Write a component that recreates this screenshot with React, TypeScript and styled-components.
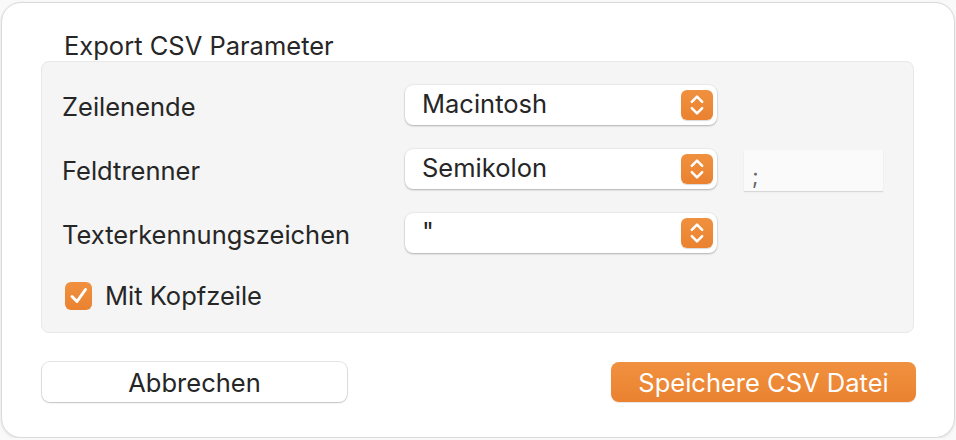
import * as React from "react";
import styled, { createGlobalStyle } from "styled-components";

const GlobalStyle = createGlobalStyle`
  html, body {
    margin: 0;
    padding: 0;
    background: #f9f9f9;
  }
  body {
    font-family: Inter, "Liberation Sans", sans-serif;
  }
`;

const rows = [
  { label: "Zeilenende", value: "Macintosh", field: null as string | null },
  { label: "Feldtrenner", value: "Semikolon", field: ";" },
  { label: "Texterkennungszeichen", value: '"', field: null },
];

const Stepper = () => (
  <StepperBox>
    <svg width="16" height="24" viewBox="0 0 16 24" fill="none">
      <path
        d="M2.8 8.8 L8 3.6 L13.2 8.8"
        stroke="#fff"
        strokeWidth="2.5"
        strokeLinecap="round"
        strokeLinejoin="round"
      />
      <path
        d="M2.8 15.2 L8 20.4 L13.2 15.2"
        stroke="#fff"
        strokeWidth="2.5"
        strokeLinecap="round"
        strokeLinejoin="round"
      />
    </svg>
  </StepperBox>
);

class App extends React.Component {
  public render() {
    return (
      <>
        <GlobalStyle />
        <Window>
          <Title>Export CSV Parameter</Title>
          <Group>
            {rows.map((r) => (
              <Row key={r.label}>
                <Label>{r.label}</Label>
                <Popup>
                  <PopupText>{r.value}</PopupText>
                  <Stepper />
                </Popup>
                {r.field !== null && <TextField>{r.field}</TextField>}
              </Row>
            ))}
            <CheckRow>
              <CheckBox>
                <svg width="20" height="18" viewBox="0 0 20 18" fill="none">
                  <path
                    d="M3 9.5 L8 14.5 L16.5 2.5"
                    stroke="#fff"
                    strokeWidth="3"
                    strokeLinecap="round"
                    strokeLinejoin="round"
                  />
                </svg>
              </CheckBox>
              <CheckLabel>Mit Kopfzeile</CheckLabel>
            </CheckRow>
          </Group>
          <Buttons>
            <Button>Abbrechen</Button>
            <Button $primary>Speichere CSV Datei</Button>
          </Buttons>
        </Window>
      </>
    );
  }
}

const Window = styled.div`
  box-sizing: border-box;
  margin: 2px 1px 0 1px;
  height: 436px;
  background: #ffffff;
  border: 1px solid #dadada;
  border-radius: 20px;
  box-shadow: 0 1px 3px rgba(0, 0, 0, 0.1);
  padding: 30px 40px 0 39px;
  color: #262626;
`;

const Title = styled.div`
  font-size: 25.5px;
  line-height: 28px;
  margin-left: 23px;
  margin-top: -1px;
  color: #262626;
`;

const Group = styled.div`
  box-sizing: border-box;
  height: 272px;
  margin-top: 1px;
  background: #f5f5f5;
  border: 1px solid #e8e8e8;
  border-radius: 8px;
  padding: 23px 20px 0 20px;
  display: flex;
  flex-direction: column;
  gap: 24px;
`;

const Row = styled.div`
  display: flex;
  align-items: center;
  height: 40px;
`;

const Label = styled.div`
  width: 343px;
  font-size: 25.5px;
  line-height: 28px;
  padding-top: 4px;
`;

const Popup = styled.div`
  box-sizing: border-box;
  width: 312px;
  height: 40px;
  background: #ffffff;
  border-radius: 8px;
  box-shadow: 0 0 0 0.5px rgba(0, 0, 0, 0.08), 0 1px 2px rgba(0, 0, 0, 0.25);
  display: flex;
  align-items: center;
  padding: 0 4px 0 17px;
`;

const PopupText = styled.div`
  flex: 1;
  font-size: 25.5px;
  line-height: 28px;
  margin-top: -2px;
`;

const StepperBox = styled.div`
  width: 32px;
  height: 30px;
  border-radius: 6px;
  background: linear-gradient(#f0913f, #ea8230);
  display: flex;
  align-items: center;
  justify-content: center;
  box-shadow: 0 1px 1px rgba(0, 0, 0, 0.15);
`;

const TextField = styled.div`
  box-sizing: border-box;
  margin-left: 27px;
  margin-top: 2px;
  width: 139px;
  height: 41px;
  background: #fafafa;
  box-shadow: 0 1px 1px rgba(0, 0, 0, 0.12);
  font-size: 22px;
  color: #666666;
  padding: 13px 0 0 8px;
`;

const CheckRow = styled.div`
  display: flex;
  align-items: center;
  gap: 13px;
  padding-left: 3px;
  margin-top: 5px;
`;

const CheckBox = styled.div`
  width: 27px;
  height: 28px;
  border-radius: 6px;
  background: linear-gradient(#f0913f, #ea8230);
  display: flex;
  align-items: center;
  justify-content: center;
`;

const CheckLabel = styled.div`
  font-size: 25.5px;
  line-height: 28px;
`;

const Buttons = styled.div`
  display: flex;
  justify-content: space-between;
  margin-top: 29px;
  padding-left: 1px;
  margin-right: -2px;
`;

const Button = styled.div<{ $primary?: boolean }>`
  box-sizing: border-box;
  width: 305px;
  height: 40px;
  border-radius: 8px;
  display: flex;
  align-items: center;
  justify-content: center;
  font-size: 25.5px;
  color: ${(p) => (p.$primary ? "#ffffff" : "#262626")};
  background: ${(p) =>
    p.$primary ? "linear-gradient(#f0913f, #ea8230)" : "#ffffff"};
  box-shadow: ${(p) =>
    p.$primary
      ? "0 1px 1px rgba(0,0,0,0.1)"
      : "0 0 0 1px rgba(0,0,0,0.1), 0 1px 2px rgba(0,0,0,0.15)"};
`;

export default App;
